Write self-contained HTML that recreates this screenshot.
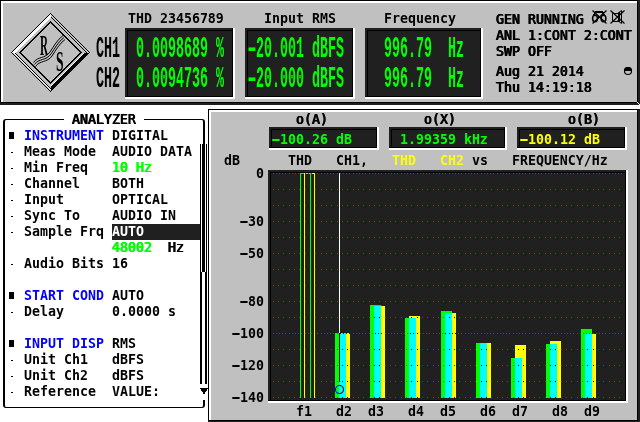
<!DOCTYPE html>
<html><head><meta charset="utf-8"><title>UPL THD</title>
<style>
html,body{margin:0;padding:0;}
body{width:640px;height:422px;background:#fff;position:relative;overflow:hidden;
 font-family:"DejaVu Sans Mono","Liberation Mono",monospace;font-size:13.288px;line-height:16px;color:#000;}
div,span{position:absolute;white-space:pre;box-sizing:border-box;}
.t{height:16px;font-weight:bold;}
.v{height:16px;font-weight:normal;text-shadow:0.45px 0 0 currentColor,-0.45px 0 0 currentColor;}
.b{color:#0000ff;}
.g{color:#00ff00;}
.G{color:#00ff00;}
.y{color:#ffff00;}
.big{height:16px;font-family:"Liberation Mono",monospace;font-size:15.15px;font-weight:bold;transform-origin:0 0;transform:scale(.88,2);}
.m{position:static;display:inline-block;transform:scaleX(1.8);}
.box{background:#202020;border-style:solid;border-width:1px;border-color:#202020 #000 #000 #202020;}
.box i{position:absolute;display:block;}
svg{position:absolute;left:0;top:0;}
#root{left:0;top:0;width:640px;height:422px;will-change:transform;}
</style></head><body><div id="root">

<div style="left:0;top:0;width:640px;height:105px;background:#202020"></div>
<div style="left:0;top:0;width:638px;height:103px;background:#000"></div>
<div style="left:1px;top:1px;width:636px;height:101px;background:#fff"></div>
<div style="left:3px;top:3px;width:634px;height:99px;background:#c0c0c0"></div>
<div style="left:208px;top:109px;width:432px;height:314px;background:#202020"></div>
<div style="left:208px;top:109px;width:430px;height:312px;background:#000"></div>
<div style="left:209px;top:110px;width:428px;height:310px;background:#fff"></div>
<div style="left:211px;top:112px;width:426px;height:308px;background:#c0c0c0"></div>
<div style="left:637px;top:102px;width:1px;height:1px;background:#fff"></div>
<div style="left:638px;top:103px;width:1px;height:1px;background:#fff"></div>
<div style="left:639px;top:104px;width:1px;height:1px;background:#fff"></div>
<div style="left:3px;top:119px;width:202px;height:289px;border:solid #000;border-width:1px 2px 1px 2px;border-radius:3px;background:#fff"></div>
<div style="left:64px;top:116px;width:80px;height:8px;background:#fff"></div>
<div style="left:199px;top:144px;width:9px;height:240px;background:#fff"></div>
<div style="left:200px;top:144px;width:2px;height:240px;background:#000"></div>
<div style="left:205px;top:144px;width:2px;height:240px;background:#000"></div>
<div style="left:201px;top:144px;width:5px;height:128px;background:#fff"></div>
<div style="left:202px;top:144px;width:3px;height:128px;background:#000"></div>
<div style="left:199px;top:384px;width:9px;height:16px;background:#fff"></div>
<svg width="640" height="422" shape-rendering="crispEdges"><polygon points="200,388 208,388 204,395" fill="#000"/></svg>
<div class="v" style="left:72px;top:112px;">ANALYZER</div>
<div style="left:9px;top:132px;width:5px;height:7px;background:#000"></div>
<div class="t" style="left:24px;top:128px;"><span class="b" style="position:static">INSTRUMENT</span></div>
<div class="t" style="left:112px;top:128px;">DIGITAL</div>
<div style="left:11px;top:152px;width:2px;height:1px;background:#000"></div>
<div class="t" style="left:24px;top:144px;">Meas Mode</div>
<div class="t" style="left:112px;top:144px;">AUDIO DATA</div>
<div style="left:11px;top:168px;width:2px;height:1px;background:#000"></div>
<div class="t" style="left:24px;top:160px;">Min Freq</div>
<div class="v g" style="left:112px;top:160px;">10 Hz</div>
<div style="left:11px;top:184px;width:2px;height:1px;background:#000"></div>
<div class="t" style="left:24px;top:176px;">Channel</div>
<div class="t" style="left:112px;top:176px;">BOTH</div>
<div style="left:11px;top:200px;width:2px;height:1px;background:#000"></div>
<div class="t" style="left:24px;top:192px;">Input</div>
<div class="t" style="left:112px;top:192px;">OPTICAL</div>
<div style="left:11px;top:216px;width:2px;height:1px;background:#000"></div>
<div class="t" style="left:24px;top:208px;">Sync To</div>
<div class="t" style="left:112px;top:208px;">AUDIO IN</div>
<div style="left:11px;top:232px;width:2px;height:1px;background:#000"></div>
<div class="t" style="left:24px;top:224px;">Sample Frq</div>
<div style="left:112px;top:224px;width:88px;height:16px;background:#202020"></div>
<div class="t" style="left:112px;top:224px;color:#fff">AUTO</div>
<div class="v g" style="left:112px;top:240px;">48002</div>
<div style="left:11px;top:264px;width:2px;height:1px;background:#000"></div>
<div class="t" style="left:24px;top:256px;">Audio Bits</div>
<div class="t" style="left:112px;top:256px;">16</div>
<div style="left:9px;top:292px;width:5px;height:7px;background:#000"></div>
<div class="t" style="left:24px;top:288px;"><span class="b" style="position:static">START COND</span></div>
<div class="t" style="left:112px;top:288px;">AUTO</div>
<div style="left:11px;top:312px;width:2px;height:1px;background:#000"></div>
<div class="t" style="left:24px;top:304px;">Delay</div>
<div class="t" style="left:112px;top:304px;">0.0000 s</div>
<div style="left:9px;top:340px;width:5px;height:7px;background:#000"></div>
<div class="t" style="left:24px;top:336px;"><span class="b" style="position:static">INPUT DISP</span></div>
<div class="t" style="left:112px;top:336px;">RMS</div>
<div style="left:11px;top:360px;width:2px;height:1px;background:#000"></div>
<div class="t" style="left:24px;top:352px;">Unit Ch1</div>
<div class="t" style="left:112px;top:352px;">dBFS</div>
<div style="left:11px;top:376px;width:2px;height:1px;background:#000"></div>
<div class="t" style="left:24px;top:368px;">Unit Ch2</div>
<div class="t" style="left:112px;top:368px;">dBFS</div>
<div style="left:11px;top:392px;width:2px;height:1px;background:#000"></div>
<div class="t" style="left:24px;top:384px;">Reference</div>
<div class="t" style="left:112px;top:384px;">VALUE:</div>
<div class="v" style="left:168px;top:240px;">Hz</div>
<div class="t" style="left:128px;top:11px;">THD 23456789</div>
<div class="t" style="left:264px;top:11px;">Input RMS</div>
<div class="t" style="left:384px;top:11px;">Frequency</div>
<div style="left:125px;top:28px;width:110px;height:71px;background:#fff"></div>
<div style="left:125px;top:28px;width:108px;height:69px;background:#000"></div>
<div style="left:125px;top:28px;width:107px;height:68px;background:#202020"></div>
<div style="left:127px;top:30px;width:105px;height:66px;background:#000"></div>
<div style="left:128px;top:31px;width:104px;height:65px;background:#202020"></div>
<div style="left:245px;top:28px;width:110px;height:71px;background:#fff"></div>
<div style="left:245px;top:28px;width:108px;height:69px;background:#000"></div>
<div style="left:245px;top:28px;width:107px;height:68px;background:#202020"></div>
<div style="left:247px;top:30px;width:105px;height:66px;background:#000"></div>
<div style="left:248px;top:31px;width:104px;height:65px;background:#202020"></div>
<div style="left:365px;top:28px;width:118px;height:71px;background:#fff"></div>
<div style="left:365px;top:28px;width:116px;height:69px;background:#000"></div>
<div style="left:365px;top:28px;width:115px;height:68px;background:#202020"></div>
<div style="left:367px;top:30px;width:113px;height:66px;background:#000"></div>
<div style="left:368px;top:31px;width:112px;height:65px;background:#202020"></div>
<div class="big" style="left:96px;top:33px;color:#000">CH1</div>
<div class="big" style="left:96px;top:63px;color:#000">CH2</div>
<div class="big" style="left:136px;top:33px;color:#00ff00">0.0098689 %</div>
<div class="big" style="left:136px;top:63px;color:#00ff00">0.0094736 %</div>
<div class="big" style="left:248px;top:33px;color:#00ff00"><span class="m">-</span>20.001 dBFS</div>
<div class="big" style="left:248px;top:63px;color:#00ff00"><span class="m">-</span>20.000 dBFS</div>
<div class="big" style="left:384px;top:33px;color:#00ff00">996.79  Hz</div>
<div class="big" style="left:384px;top:63px;color:#00ff00">996.79  Hz</div>
<div class="v" style="left:496px;top:12px;">GEN RUNNING</div>
<div class="v" style="left:496px;top:28px;">ANL 1:CONT 2:CONT</div>
<div class="v" style="left:496px;top:44px;">SWP OFF</div>
<div class="v" style="left:496px;top:64px;">Aug 21 2014</div>
<div class="v" style="left:496px;top:80px;">Thu 14:19:18</div>
<svg width="640" height="422" shape-rendering="crispEdges">
<g transform="translate(50.5,52.5)">
<polygon points="0,-39.5 39.5,0 0,39.5 -39.5,0" fill="#000"/>
<polygon points="0,-38.5 38.5,0 0,38.5 -38.5,0" fill="#c0c0c0"/>
<polygon points="0,-38.5 -38.5,0 -34.5,0 0,-34.5" fill="#fff"/>
<polygon points="0,38.5 38.5,0 34.5,0 0,34.5" fill="#000"/>
<polygon points="0,-36.5 36.5,0 35.5,0 0,-35.5" fill="#000"/>
<polygon points="0,37.5 -37.5,0 -36.5,0 0,36.5" fill="#fff"/>
<polygon points="0,36.5 -36.5,0 -35.5,0 0,35.5" fill="#000"/>
<polygon points="0,34.5 34.5,0 33.5,0 0,33.5" fill="#fff"/>
<polygon points="0,-31.5 31.5,0 0,31.5 -31.5,0" fill="#000"/>
<polygon points="0,-29.5 29.5,0 0,29.5 -29.5,0" fill="#c0c0c0"/>
</g>
<g fill="none" stroke="#000" stroke-width="1" shape-rendering="auto">
<path d="M33.5,62.5 C38,56 45,59 50,52 C54,46 57,40 63,35.5"/>
<path d="M34.5,64.5 C39,58 46,61 51,54 C55,48 58,42 64,37.5"/>
<path d="M35.5,66.5 C40,60 47,63 52,56 C56,50 59,44 65,39.5"/>
</g>
</svg>
<div style="left:40px;top:25px;height:20px;font:bold 15.1px/20px 'Liberation Serif',serif;transform-origin:0 0;transform:scale(.74,2)">R</div>
<div style="left:56px;top:41px;height:20px;font:bold 15.1px/20px 'Liberation Serif',serif;transform-origin:0 0;transform:scale(.9,2)">S</div>
<svg width="640" height="422">
<g stroke="#000" stroke-width="1" fill="none">
<path d="M592.5,10.5 L606.5,23.5 M606.5,10.5 L592.5,23.5" stroke-width="1.2"/>
<path d="M610.5,10.5 L624.5,23.5 M624.5,10.5 L610.5,23.5" stroke-width="1.2"/>
</g>
<g shape-rendering="crispEdges">
<rect x="595" y="11" width="8" height="2" fill="#000"/>
<rect x="594" y="12" width="2" height="2" fill="#000"/>
<rect x="602" y="12" width="2" height="2" fill="#000"/>
<rect x="593" y="14" width="2" height="1" fill="#000"/>
<rect x="603" y="14" width="2" height="1" fill="#000"/>
<rect x="598" y="16" width="2" height="2" fill="#000"/>
<rect x="612" y="13" width="6" height="8" fill="none" stroke="#000"/>
<rect x="619" y="12" width="1" height="10" fill="#000"/>
</g>
<ellipse cx="595" cy="18.5" rx="2.4" ry="3.2" fill="none" stroke="#000" stroke-width="1.5"/>
<ellipse cx="603.5" cy="18.5" rx="2.4" ry="3.2" fill="none" stroke="#000" stroke-width="1.5"/>
<path d="M617.5,13.5 L621.5,10.5 L621.5,23.5 L617.5,20.5" fill="none" stroke="#000"/>
<circle cx="628" cy="71" r="3.5" fill="#c0c0c0" stroke="#000" stroke-width="1.2"/>
<path d="M624,71 A4,4 0 0 1 632,71 Z" fill="#000"/>
</svg>
<div class="v" style="left:296px;top:112px;">o(A)</div>
<div class="v" style="left:424px;top:112px;">o(X)</div>
<div class="v" style="left:568px;top:112px;">o(B)</div>
<div style="left:269px;top:127px;width:110px;height:23px;background:#fff"></div>
<div style="left:269px;top:127px;width:108px;height:21px;background:#000"></div>
<div style="left:269px;top:127px;width:107px;height:20px;background:#202020"></div>
<div style="left:271px;top:129px;width:105px;height:18px;background:#000"></div>
<div style="left:272px;top:130px;width:104px;height:17px;background:#202020"></div>
<div style="left:389px;top:127px;width:118px;height:23px;background:#fff"></div>
<div style="left:389px;top:127px;width:116px;height:21px;background:#000"></div>
<div style="left:389px;top:127px;width:115px;height:20px;background:#202020"></div>
<div style="left:391px;top:129px;width:113px;height:18px;background:#000"></div>
<div style="left:392px;top:130px;width:112px;height:17px;background:#202020"></div>
<div style="left:517px;top:127px;width:110px;height:23px;background:#fff"></div>
<div style="left:517px;top:127px;width:108px;height:21px;background:#000"></div>
<div style="left:517px;top:127px;width:107px;height:20px;background:#202020"></div>
<div style="left:519px;top:129px;width:105px;height:18px;background:#000"></div>
<div style="left:520px;top:130px;width:104px;height:17px;background:#202020"></div>
<div class="t G" style="left:272px;top:132px;"><span class="m">-</span>100.26 dB</div>
<div class="t G" style="left:400px;top:132px;">1.99359 kHz</div>
<div class="t y" style="left:520px;top:132px;"><span class="m">-</span>100.12 dB</div>
<div class="t" style="left:224px;top:153px;">dB</div>
<div class="t" style="left:288px;top:153px;">THD   CH1,</div>
<div class="t y" style="left:392px;top:153px;">THD   CH2</div>
<div class="t" style="left:472px;top:153px;">vs   FREQUENCY/Hz</div>
<div style="left:268px;top:170px;width:360px;height:233px;background:#fff"></div>
<div style="left:268px;top:170px;width:358px;height:231px;background:#000"></div>
<div style="left:268px;top:170px;width:357px;height:230px;background:#202020"></div>
<div style="left:270px;top:172px;width:355px;height:228px;background:#000"></div>
<div style="left:271px;top:173px;width:354px;height:227px;background:#202020"></div>
<div class="t" style="left:256px;top:166px;">0</div>
<div class="t" style="left:240px;top:214px;"><span class="m">-</span>30</div>
<div class="t" style="left:240px;top:246px;"><span class="m">-</span>50</div>
<div class="t" style="left:240px;top:294px;"><span class="m">-</span>80</div>
<div class="t" style="left:232px;top:326px;"><span class="m">-</span>100</div>
<div class="t" style="left:232px;top:358px;"><span class="m">-</span>120</div>
<div class="t" style="left:232px;top:390px;"><span class="m">-</span>140</div>
<div class="t" style="left:296px;top:404px;">f1</div>
<div class="t" style="left:336px;top:404px;">d2</div>
<div class="t" style="left:368px;top:404px;">d3</div>
<div class="t" style="left:408px;top:404px;">d4</div>
<div class="t" style="left:440px;top:404px;">d5</div>
<div class="t" style="left:480px;top:404px;">d6</div>
<div class="t" style="left:512px;top:404px;">d7</div>
<div class="t" style="left:552px;top:404px;">d8</div>
<div class="t" style="left:584px;top:404px;">d9</div>
<svg width="640" height="422" shape-rendering="crispEdges">
<defs><pattern id="p3" x="273" y="173" width="16" height="16" patternUnits="userSpaceOnUse"><rect x="0" y="0" width="1" height="1" fill="#f00"/><rect x="5" y="0" width="1" height="1" fill="#f00"/><rect x="10" y="0" width="1" height="1" fill="#f00"/></pattern>
<pattern id="p5" x="273" y="173" width="16" height="160" patternUnits="userSpaceOnUse"><rect x="0" y="0" width="1" height="1" fill="#f00"/><rect x="3" y="0" width="1" height="1" fill="#f00"/><rect x="6" y="0" width="1" height="1" fill="#f00"/><rect x="9" y="0" width="1" height="1" fill="#f00"/><rect x="12" y="0" width="1" height="1" fill="#f00"/></pattern></defs>
<rect x="273" y="189" width="352" height="144" fill="url(#p3)"/>
<rect x="273" y="349" width="352" height="49" fill="url(#p3)"/>
<rect x="273" y="173" width="352" height="161" fill="url(#p5)"/>
<rect x="335" y="333" width="11" height="65" fill="#00ff00"/>
<rect x="339" y="333" width="11" height="65" fill="#ffff00"/>
<rect x="339" y="333" width="7" height="65" fill="#00ffff"/>
<rect x="370" y="305" width="11" height="93" fill="#00ff00"/>
<rect x="374" y="306" width="11" height="92" fill="#ffff00"/>
<rect x="374" y="306" width="7" height="92" fill="#00ffff"/>
<rect x="405" y="318" width="11" height="80" fill="#00ff00"/>
<rect x="409" y="316" width="11" height="82" fill="#ffff00"/>
<rect x="409" y="318" width="7" height="80" fill="#00ffff"/>
<rect x="441" y="311" width="11" height="87" fill="#00ff00"/>
<rect x="445" y="313" width="11" height="85" fill="#ffff00"/>
<rect x="445" y="313" width="7" height="85" fill="#00ffff"/>
<rect x="476" y="343" width="11" height="55" fill="#00ff00"/>
<rect x="480" y="343" width="11" height="55" fill="#ffff00"/>
<rect x="480" y="343" width="7" height="55" fill="#00ffff"/>
<rect x="511" y="358" width="11" height="40" fill="#00ff00"/>
<rect x="515" y="345" width="11" height="53" fill="#ffff00"/>
<rect x="515" y="358" width="7" height="40" fill="#00ffff"/>
<rect x="546" y="344" width="11" height="54" fill="#00ff00"/>
<rect x="550" y="341" width="11" height="57" fill="#ffff00"/>
<rect x="550" y="344" width="7" height="54" fill="#00ffff"/>
<rect x="581" y="329" width="11" height="69" fill="#00ff00"/>
<rect x="585" y="334" width="11" height="64" fill="#ffff00"/>
<rect x="585" y="334" width="7" height="64" fill="#00ffff"/>
<rect x="300" y="173" width="1" height="225" fill="#00ff00"/>
<rect x="310" y="173" width="1" height="225" fill="#00ff00"/>
<rect x="304" y="173" width="1" height="225" fill="#ffff00"/>
<rect x="314" y="173" width="1" height="225" fill="#ffff00"/>
<rect x="300" y="173" width="4" height="1" fill="#00ff00"/>
<rect x="306" y="173" width="2" height="1" fill="#00ffff"/>
<rect x="309" y="173" width="1" height="1" fill="#00ffff"/>
<rect x="312" y="173" width="3" height="1" fill="#ffff00"/>
<rect x="374" y="317" width="1" height="1" fill="#000"/>
<rect x="379" y="317" width="1" height="1" fill="#000"/>
<rect x="411" y="317" width="1" height="1" fill="#0000ff"/>
<rect x="417" y="317" width="1" height="1" fill="#0000ff"/>
<rect x="443" y="317" width="1" height="1" fill="#ff00ff"/>
<rect x="449" y="317" width="1" height="1" fill="#000"/>
<rect x="454" y="317" width="1" height="1" fill="#0000ff"/>
<rect x="337" y="333" width="1" height="1" fill="#ff00ff"/>
<rect x="340" y="333" width="1" height="1" fill="#000"/>
<rect x="343" y="333" width="1" height="1" fill="#000"/>
<rect x="346" y="333" width="1" height="1" fill="#0000ff"/>
<rect x="349" y="333" width="1" height="1" fill="#0000ff"/>
<rect x="372" y="333" width="1" height="1" fill="#ff00ff"/>
<rect x="375" y="333" width="1" height="1" fill="#000"/>
<rect x="378" y="333" width="1" height="1" fill="#000"/>
<rect x="381" y="333" width="1" height="1" fill="#0000ff"/>
<rect x="407" y="333" width="1" height="1" fill="#ff00ff"/>
<rect x="410" y="333" width="1" height="1" fill="#000"/>
<rect x="413" y="333" width="1" height="1" fill="#000"/>
<rect x="417" y="333" width="1" height="1" fill="#0000ff"/>
<rect x="442" y="333" width="1" height="1" fill="#ff00ff"/>
<rect x="445" y="333" width="1" height="1" fill="#000"/>
<rect x="449" y="333" width="1" height="1" fill="#000"/>
<rect x="452" y="333" width="1" height="1" fill="#0000ff"/>
<rect x="455" y="333" width="1" height="1" fill="#0000ff"/>
<rect x="583" y="333" width="1" height="1" fill="#ff00ff"/>
<rect x="586" y="333" width="1" height="1" fill="#ff00ff"/>
<rect x="589" y="333" width="1" height="1" fill="#ff00ff"/>
<rect x="337" y="349" width="1" height="1" fill="#ff00ff"/>
<rect x="342" y="349" width="1" height="1" fill="#000"/>
<rect x="347" y="349" width="1" height="1" fill="#0000ff"/>
<rect x="374" y="349" width="1" height="1" fill="#000"/>
<rect x="379" y="349" width="1" height="1" fill="#000"/>
<rect x="406" y="349" width="1" height="1" fill="#ff00ff"/>
<rect x="411" y="349" width="1" height="1" fill="#000"/>
<rect x="417" y="349" width="1" height="1" fill="#0000ff"/>
<rect x="443" y="349" width="1" height="1" fill="#ff00ff"/>
<rect x="449" y="349" width="1" height="1" fill="#000"/>
<rect x="454" y="349" width="1" height="1" fill="#0000ff"/>
<rect x="481" y="349" width="1" height="1" fill="#000"/>
<rect x="486" y="349" width="1" height="1" fill="#000"/>
<rect x="518" y="349" width="1" height="1" fill="#0000ff"/>
<rect x="523" y="349" width="1" height="1" fill="#0000ff"/>
<rect x="550" y="349" width="1" height="1" fill="#000"/>
<rect x="555" y="349" width="1" height="1" fill="#000"/>
<rect x="582" y="349" width="1" height="1" fill="#ff00ff"/>
<rect x="587" y="349" width="1" height="1" fill="#000"/>
<rect x="593" y="349" width="1" height="1" fill="#0000ff"/>
<rect x="337" y="365" width="1" height="1" fill="#ff00ff"/>
<rect x="342" y="365" width="1" height="1" fill="#000"/>
<rect x="347" y="365" width="1" height="1" fill="#0000ff"/>
<rect x="374" y="365" width="1" height="1" fill="#000"/>
<rect x="379" y="365" width="1" height="1" fill="#000"/>
<rect x="406" y="365" width="1" height="1" fill="#ff00ff"/>
<rect x="411" y="365" width="1" height="1" fill="#000"/>
<rect x="417" y="365" width="1" height="1" fill="#0000ff"/>
<rect x="443" y="365" width="1" height="1" fill="#ff00ff"/>
<rect x="449" y="365" width="1" height="1" fill="#000"/>
<rect x="454" y="365" width="1" height="1" fill="#0000ff"/>
<rect x="481" y="365" width="1" height="1" fill="#000"/>
<rect x="486" y="365" width="1" height="1" fill="#000"/>
<rect x="513" y="365" width="1" height="1" fill="#ff00ff"/>
<rect x="518" y="365" width="1" height="1" fill="#000"/>
<rect x="523" y="365" width="1" height="1" fill="#0000ff"/>
<rect x="550" y="365" width="1" height="1" fill="#000"/>
<rect x="555" y="365" width="1" height="1" fill="#000"/>
<rect x="582" y="365" width="1" height="1" fill="#ff00ff"/>
<rect x="587" y="365" width="1" height="1" fill="#000"/>
<rect x="593" y="365" width="1" height="1" fill="#0000ff"/>
<rect x="337" y="381" width="1" height="1" fill="#ff00ff"/>
<rect x="342" y="381" width="1" height="1" fill="#000"/>
<rect x="347" y="381" width="1" height="1" fill="#0000ff"/>
<rect x="374" y="381" width="1" height="1" fill="#000"/>
<rect x="379" y="381" width="1" height="1" fill="#000"/>
<rect x="406" y="381" width="1" height="1" fill="#ff00ff"/>
<rect x="411" y="381" width="1" height="1" fill="#000"/>
<rect x="417" y="381" width="1" height="1" fill="#0000ff"/>
<rect x="443" y="381" width="1" height="1" fill="#ff00ff"/>
<rect x="449" y="381" width="1" height="1" fill="#000"/>
<rect x="454" y="381" width="1" height="1" fill="#0000ff"/>
<rect x="481" y="381" width="1" height="1" fill="#000"/>
<rect x="486" y="381" width="1" height="1" fill="#000"/>
<rect x="513" y="381" width="1" height="1" fill="#ff00ff"/>
<rect x="518" y="381" width="1" height="1" fill="#000"/>
<rect x="523" y="381" width="1" height="1" fill="#0000ff"/>
<rect x="550" y="381" width="1" height="1" fill="#000"/>
<rect x="555" y="381" width="1" height="1" fill="#000"/>
<rect x="582" y="381" width="1" height="1" fill="#ff00ff"/>
<rect x="587" y="381" width="1" height="1" fill="#000"/>
<rect x="593" y="381" width="1" height="1" fill="#0000ff"/>
<rect x="337" y="397" width="1" height="1" fill="#ff00ff"/>
<rect x="342" y="397" width="1" height="1" fill="#000"/>
<rect x="347" y="397" width="1" height="1" fill="#0000ff"/>
<rect x="374" y="397" width="1" height="1" fill="#000"/>
<rect x="379" y="397" width="1" height="1" fill="#000"/>
<rect x="406" y="397" width="1" height="1" fill="#ff00ff"/>
<rect x="411" y="397" width="1" height="1" fill="#000"/>
<rect x="417" y="397" width="1" height="1" fill="#0000ff"/>
<rect x="443" y="397" width="1" height="1" fill="#ff00ff"/>
<rect x="449" y="397" width="1" height="1" fill="#000"/>
<rect x="454" y="397" width="1" height="1" fill="#0000ff"/>
<rect x="481" y="397" width="1" height="1" fill="#000"/>
<rect x="486" y="397" width="1" height="1" fill="#000"/>
<rect x="513" y="397" width="1" height="1" fill="#ff00ff"/>
<rect x="518" y="397" width="1" height="1" fill="#000"/>
<rect x="523" y="397" width="1" height="1" fill="#0000ff"/>
<rect x="550" y="397" width="1" height="1" fill="#000"/>
<rect x="555" y="397" width="1" height="1" fill="#000"/>
<rect x="582" y="397" width="1" height="1" fill="#ff00ff"/>
<rect x="587" y="397" width="1" height="1" fill="#000"/>
<rect x="593" y="397" width="1" height="1" fill="#0000ff"/>
<rect x="339" y="173" width="1" height="160" fill="#fff"/>
<rect x="339" y="333" width="1" height="49" fill="#000"/>
</svg>
<svg width="640" height="422"><defs><clipPath id="cl"><rect x="330" y="380" width="9" height="20"/></clipPath><clipPath id="cr"><rect x="339" y="380" width="9" height="20"/></clipPath></defs><circle cx="339.5" cy="389.5" r="4" fill="none" stroke="#0000ff" stroke-width="1.1" clip-path="url(#cl)"/><circle cx="339.5" cy="389.5" r="4" fill="none" stroke="#000" stroke-width="1.1" clip-path="url(#cr)"/></svg>
</div></body></html>
